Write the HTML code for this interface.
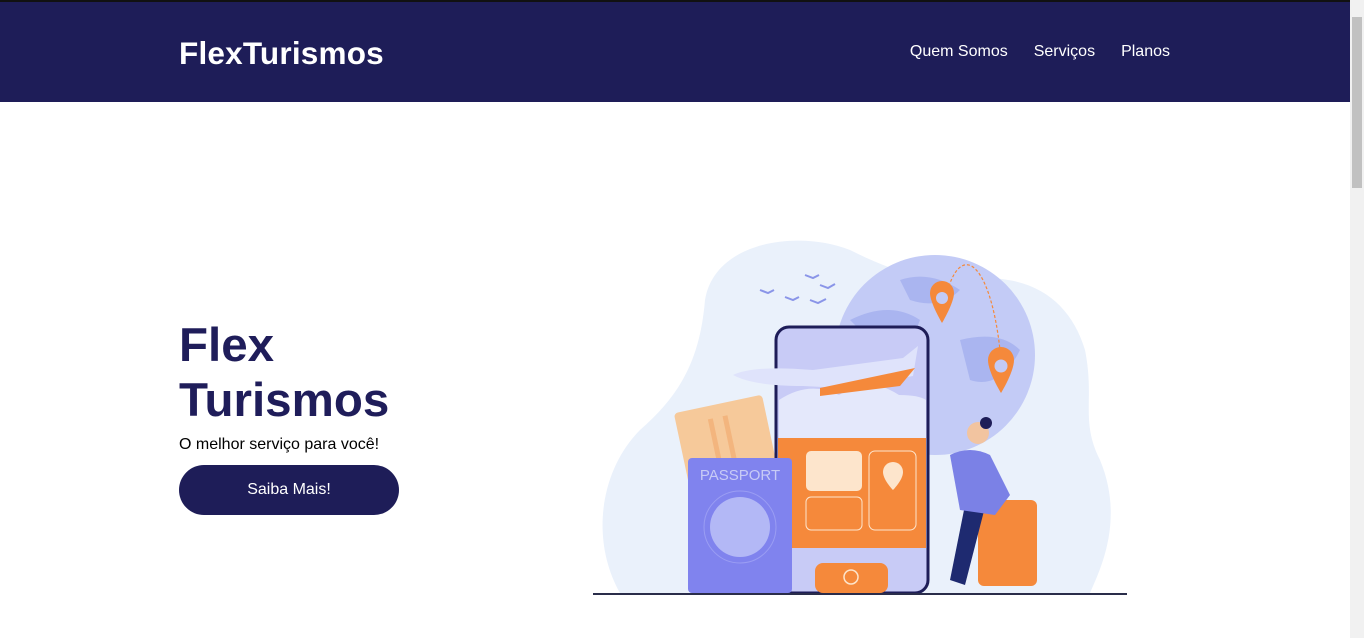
<!DOCTYPE html>
<html><head><meta charset="utf-8"><style>
*{margin:0;padding:0;box-sizing:border-box}
body{width:1364px;height:638px;overflow:hidden;background:#fff;font-family:"Liberation Sans",Arial,sans-serif;position:relative}
header{position:absolute;left:0;top:0;width:1350px;height:102px;background:#1e1d58;border-top:2px solid #111}
.logo{position:absolute;left:179px;top:33px;color:#fff;font-size:31.5px;font-weight:bold;letter-spacing:0.2px}
nav{position:absolute;top:41px;right:180px;color:#fff;font-size:16px}
nav span{margin-left:26px}
h1{position:absolute;left:179px;top:318px;color:#1f1d5a;font-size:47.5px;line-height:55px;font-weight:bold}
.sub{position:absolute;left:179px;top:436px;font-size:16px;color:#000}
.btn{position:absolute;left:179px;top:465px;width:220px;height:50px;border-radius:25px;background:#1e1d58;color:#fff;font-size:16px;text-align:center;line-height:50px}
.sb{position:absolute;left:1350px;top:0;width:14px;height:638px;background:#f1f1f1}
.th{position:absolute;left:1352px;top:17px;width:10px;height:171px;background:#c1c1c1}
svg{position:absolute;left:0;top:0}
</style></head><body>
<header><div class="logo">FlexTurismos</div><nav><span>Quem Somos</span><span>Serviços</span><span>Planos</span></nav></header>
<h1>Flex<br>Turismos</h1>
<div class="sub">O melhor serviço para você!</div>
<div class="btn">Saiba Mais!</div>
<svg width="1350" height="638">
<path d="M620 593 C590 540 600 470 640 430 C680 395 700 360 705 300 C715 240 800 230 850 250 C890 270 920 280 960 280 C1030 270 1070 300 1085 350 C1095 400 1080 420 1100 460 C1125 520 1100 570 1090 593 Z" fill="#eaf1fb"/>
<circle cx="935" cy="355" r="100" fill="#c3cbf6"/>
<path d="M850 320 q40 -20 70 0 q-10 30 -40 30z M960 340 q40 -10 60 10 q-20 40 -50 30z M900 280 q30 -10 60 10 q-20 20 -50 10z" fill="#aab5f0"/>
<path d="M946 296 C960 240 990 260 1000 350" fill="none" stroke="#f5893b" stroke-width="1.2" stroke-dasharray="3 2"/>
<path d="M760 290 l8 3 l6 -3 M785 297 l8 3 l6 -3 M810 300 l8 3 l8 -4 M805 275 l8 3 l6 -3 M820 285 l8 3 l7 -4" fill="none" stroke="#8a95e8" stroke-width="2"/>
<g transform="rotate(-12 735 475)"><rect x="688" y="402" width="90" height="150" rx="4" fill="#f6c99a"/><rect x="720" y="415" width="5" height="60" fill="#f3b57e"/><rect x="735" y="415" width="5" height="60" fill="#f3b57e"/></g>
<rect x="776" y="327" width="152" height="266" rx="13" fill="#c8cbf6" stroke="#1e1d58" stroke-width="3"/>
<path d="M779 400 q30 -20 60 -5 q30 -20 60 0 q20 0 27 5 v38 h-147z" fill="#e4e8fb"/>
<rect x="778" y="438" width="148" height="110" fill="#f5893b"/>
<rect x="806" y="451" width="56" height="40" rx="5" fill="#fde5cc"/>
<rect x="806" y="497" width="56" height="33" rx="5" fill="none" stroke="#fde5cc"/>
<rect x="869" y="451" width="47" height="79" rx="6" fill="none" stroke="#fde5cc"/>
<path d="M893 462 a10 10 0 0 1 10 10 c0 8 -10 18 -10 18 c0 0 -10 -10 -10 -18 a10 10 0 0 1 10 -10z" fill="#fde5cc"/>
<rect x="815" y="563" width="73" height="30" rx="8" fill="#f5893b"/>
<circle cx="851" cy="577" r="7" fill="none" stroke="#fde5cc" stroke-width="1.5"/>
<path d="M733 375 q20 -10 80 -5 l90 -12 l15 -12 l-5 30 l-70 12 l-40 -2 q-50 0 -70 -11z" fill="#dfe3fb"/>
<path d="M820 388 l95 -20 l-15 18 l-80 10z" fill="#f5893b"/>
<path d="M930 293 a12 12 0 0 1 24 0 c0 10 -12 30 -12 30 c0 0 -12 -20 -12 -30z" fill="#f5893b"/><circle cx="942" cy="298" r="6" fill="#c3cbf6"/>
<path d="M988 360 a13 13 0 0 1 26 0 c0 12 -13 33 -13 33 c0 0 -13 -21 -13 -33z" fill="#f5893b"/><circle cx="1001" cy="366" r="6.5" fill="#c3cbf6"/>
<rect x="688" y="458" width="104" height="135" rx="4" fill="#8083ee"/>
<text x="740" y="480" text-anchor="middle" fill="#c8cbf6" font-size="15" font-family="Liberation Sans">PASSPORT</text>
<circle cx="740" cy="527" r="36" fill="none" stroke="#9a9df3"/>
<circle cx="740" cy="527" r="30" fill="#b3b8f6"/>
<rect x="978" y="500" width="59" height="86" rx="6" fill="#f5893b"/>
<path d="M965 505 l-15 75 l15 5 l20 -78z" fill="#1e2a70"/>
<path d="M950 455 q20 -10 40 0 l20 40 l-15 20 l-35 -5z" fill="#7b81e6"/>
<circle cx="978" cy="433" r="11" fill="#f2c4a0"/><circle cx="986" cy="423" r="6" fill="#1e1d58"/>
<path d="M593 594 H1127" stroke="#2a2d4a" stroke-width="2"/>
</svg>
<div class="sb"></div><div class="th"></div>
</body></html>
